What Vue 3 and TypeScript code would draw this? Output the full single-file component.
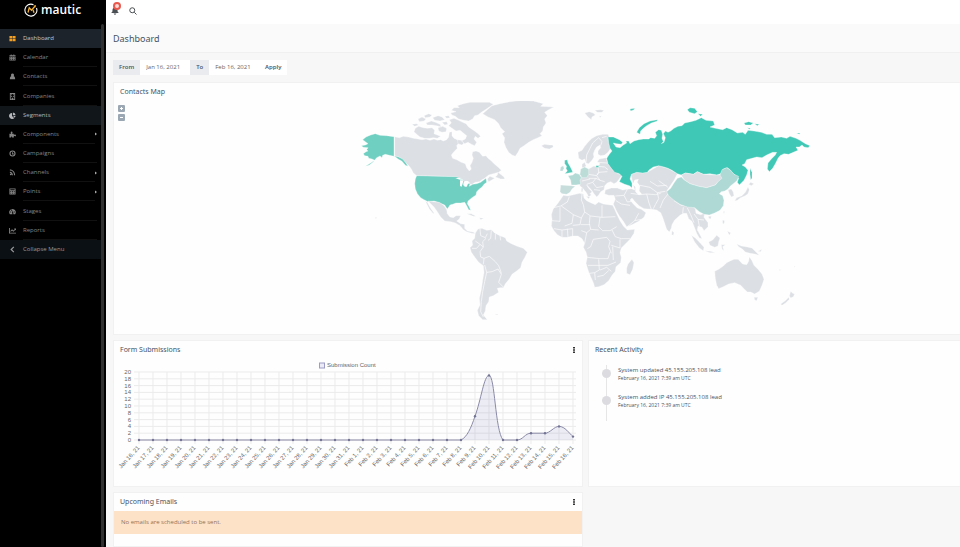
<script setup lang="ts">
import { ref } from 'vue'

interface NavItem {
  label: string
  icon: string
  state?: string
  sub?: boolean
}

const nav: NavItem[] = [
  { label: 'Dashboard', icon: 'M1 2h6.500v5H1zM8.500 2H15v5H8.500zM1 8h6.500v6H1zM8.500 8H15v6H8.500z', state: 'active' },
  { label: 'Calendar', icon: 'M1 3h3V1h2v2h4V1h2v2h3v2H1zM1 6h14v9H1zM3 8v1.500h2V8zm4 0v1.500h2V8zm4 0v1.500h2V8zm-8 3.500V13h2v-1.500zm4 0V13h2v-1.500zm4 0V13h2v-1.500z' },
  { label: 'Contacts', icon: 'M8 1a3.500 3.500 0 0 1 2.500 6C13 8 14 10 14 14H2c0-4 1-6 3.500-7A3.500 3.500 0 0 1 8 1z' },
  { label: 'Companies', icon: 'M2 0h12v16H2zM4 2v12h2v-3h4v3h2V2zM5 3h2v2H5zm4 0h2v2H9zM5 7h2v2H5zm4 0h2v2H9z' },
  { label: 'Segments', icon: 'M7 2v7l5 5A7 7 0 1 1 7 2zM9 1a7 7 0 0 1 6 6H9zM9 8.500h6a7 7 0 0 1-2 4.500z', state: 'hover' },
  { label: 'Components', icon: 'M1 6h4C3 3 4 1 6 1s3 2 1 5h4v3c3-2 5-1 5 1s-2 3-5 1v4H7c1-3-3-3-2 0H1z', sub: true },
  { label: 'Campaigns', icon: 'M8 1a7 7 0 1 0 0 14A7 7 0 0 0 8 1zm0 2.500a4.500 4.500 0 1 1 0 9 4.500 4.500 0 0 1 0-9zM7 5h2v3h2v2H7z' },
  { label: 'Channels', icon: 'M2 1c7 0 12 6 12 13h-2.500C11.500 8 8 3.500 2 3.500zM2 6c4 0 7 4 7 8H6.500C6.500 11 5 8.500 2 8.500zM4 10a2 2 0 1 1 0 4 2 2 0 0 1 0-4z', sub: true },
  { label: 'Points', icon: 'M1 1h14v14H1zM3 3v2h10V3zm0 4v1.500h2V7zm4 0v1.500h2V7zm4 0v1.500h2V7zm-8 4v1.500h2V11zm4 0v1.500h2V11zm4 0v1.500h2V11z', sub: true },
  { label: 'Stages', icon: 'M8 2a7.500 7.500 0 0 1 6 12h-4L9 5l-2 6 1 3H2A7.500 7.500 0 0 1 8 2zM3 8v2h2V8zm2-4v2h2V4zm6 4v2h2V8z' },
  { label: 'Reports', icon: 'M0 2h2v11h14v2H0zM3 9l4-4 3 3 3-3-1.500-1.500H16V8l-1.500-1.500L10 11 7 8l-3 3z' },
  { label: 'Collapse Menu', icon: 'M10 1l2 2-5 5 5 5-2 2-7-7z', state: 'collapse' },
]

const dateFrom = ref('Jan 16, 2021')
const dateTo = ref('Feb 16, 2021')

/* Map: outlines grouped by tile, each tile with its own origin. */
interface Shape {
  tone: string
  d: string
}
interface Tile {
  x: number
  y: number
  shapes: Shape[]
}

const tiles: Tile[] = [
  {
    x: 1050,
    y: 285,
    shapes: [
      { tone: 'land', d: 'M134 125L148 128 160 124 176 126 190 130 204 132 216 134 228 132 240 136 252 132 262 136 272 134 280 138 290 134 296 126 298 112 306 110 306 122 312 130 322 134 328 142 320 152 322 160 312 170 304 180 308 190 320 194 334 202 346 206 350 218 358 228 364 222 360 212 366 202 370 190 366 180 368 170 378 168 388 172 398 184 408 182 414 190 422 196 434 208 444 216 454 226 446 232 430 236 416 240 404 250 396 254 388 260 376 262 366 268 356 268 350 258 340 262 332 254 318 246 200 242 190 234 184 222 178 214 168 204 156 192 146 186 134 183Z' },
      { tone: 'land', d: 'M444 232L452 238 462 246 464 252 452 252 442 248 436 246 442 240ZM412 252L420 244 434 250 424 256 416 260Z' },
      { tone: 'land', d: 'M196 100L206 94 220 98 232 100 246 98 254 106 252 116 262 120 272 124 262 130 250 128 238 130 224 130 210 126 200 118 192 110ZM204 72L216 66 228 72 222 78 208 80ZM186 88L200 86 206 90 194 94ZM228 84L244 78 256 82 270 88 274 96 260 92 246 90 232 90ZM222 62L236 56 246 60 240 66 226 68ZM248 68L264 62 276 66 284 74 270 78 254 76ZM264 98L278 94 290 100 288 110 276 112 266 108ZM276 82L290 80 294 88 284 90ZM284 64L296 62 300 68 290 70Z' },
      { tone: 'land', d: 'M298 74L312 70 326 76 338 82 348 86 356 96 368 104 382 114 392 124 384 130 376 124 372 132 380 142 374 152 364 148 354 142 344 146 334 138 346 132 350 122 340 114 330 106 318 108 306 100 296 92 304 84ZM322 134L334 136 342 144 336 150 324 146Z' },
      { tone: 'land', d: 'M318 50L304 46 312 38 328 38 322 32 340 26 360 22 390 22 418 22 430 28 418 36 406 44 394 52 384 60 374 62 368 72 356 78 342 76 326 72 316 64 306 60 302 54Z' },
      { tone: 'usa', d: 'M132 125L132 184 118 181 106 178 98 181 96 188 90 183 80 188 70 200 58 210 46 214 62 204 74 196 66 192 56 190 54 184 44 182 40 176 48 170 54 168 50 164 54 158 40 157 34 152 46 150 54 146 46 140 38 134 48 126 62 120 76 116 90 121 110 122ZM132 182L146 186 158 192 168 204 174 214 166 211 156 199 144 192Z' },
      { tone: 'usa', d: 'M200 242L318 245 332 250 342 258 340 270 346 276 352 264 360 266 358 274 368 268 380 266 392 262 400 256 408 250 410 262 402 268 396 276 388 282 380 290 378 300 366 308 354 318 352 326 358 336 362 346 356 344 350 332 344 322 332 324 318 324 308 328 300 330 292 342 284 330 274 326 264 322 252 318 234 320 222 314 212 308 202 296 196 282 194 266 196 252Z' },
      { tone: 'sea', d: 'M330 256L340 256 338 266 334 276 330 272ZM316 250L328 248 340 254 330 254ZM344 258L354 258 360 264 354 266 350 276 346 272Z' },
      { tone: 'land', d: 'M76 366l5 2-4 3z' },
    ],
  },
  {
    x: 1470,
    y: 285,
    shapes: [
      { tone: 'land', d: 'M-22 56L-8 44 6 32 30 26 60 20 96 16 130 18 160 26 152 34 192 36 176 44 164 52 172 62 164 72 168 84 160 96 158 108 150 116 156 122 144 128 130 134 116 142 102 152 90 160 84 172 76 184 66 180 56 172 48 158 42 142 44 128 36 116 44 110 32 98 26 86 14 74 -6 66Z' },
      { tone: 'land', d: 'M154 152L164 148 178 150 188 150 190 156 178 162 164 160ZM284 54L298 50 310 54 316 60 306 66 304 74 294 66ZM314 46L330 44 342 46 336 52 322 52ZM328 62L334 64 330 68Z' },
      { tone: 'land', d: 'M264 172L276 166 284 154 294 142 306 130 320 122 338 118 354 118 358 126 354 136 358 148 362 160 354 172 344 180 332 182 324 178 324 168 332 158 330 150 320 156 314 166 310 176 312 186 306 196 296 206 288 204 284 192 276 196 266 190ZM276 208L284 202 288 212 284 218 276 218Z' },
      { tone: 'land', d: 'M296 222L310 214 324 214 330 206 322 200 328 192 348 188 354 206 366 222 384 236 396 240 386 254 380 262 372 266 362 260 352 264 344 272 342 284 332 290 326 300 320 306 312 296 304 284 296 276 290 270 296 280 306 290 300 296 304 300 296 306 290 294 280 282 270 272 266 262 272 244 280 230Z' },
      { tone: 'line', d: 'M288 202L290 180 300 160 308 144 326 128M326 128L336 140 332 152M336 128L350 124M322 202L352 204M324 214L344 216 354 224M324 214L326 232 322 240M296 238L320 242 326 232 352 230M320 242L330 256 344 260M296 250L318 250 330 256M290 268L308 262 318 250M308 262L320 278 340 274M276 258L300 252M312 284L330 286' },
      { tone: 'de', d: 'M272 222L284 216 296 222 296 238 290 248 276 248 270 238Z' },
      { tone: 'fr', d: 'M234 242L248 240 256 234 268 238 274 248 270 256 272 268 258 270 244 270 242 256Z' },
      { tone: 'es', d: 'M212 270L244 272 256 274 246 282 240 292 230 298 216 296 210 290Z' },
      { tone: 'gb', d: 'M224 196L232 194 234 204 240 214 246 226 248 232 236 234 224 236 232 228 228 220 230 214 224 206Z' },
      { tone: 'de', d: 'M212 216L220 212 222 220 218 228 210 228Z' },
      { tone: 'land', d: 'M274 280L279 279 278 290 274 290ZM288 304L300 306 296 311Z' },
      { tone: 'ru', d: 'M318 212h8v5h-8z' },
    ],
  },
  {
    x: 1620,
    y: 540,
    shapes: [
      { tone: 'land', d: 'M272 -18L290 -23 322 -23 356 -43 384 -35 412 -19 402 1 380 33 402 59 442 79 450 74 466 86 468 100 482 104 494 100 492 112 504 128 504 140 492 152 486 142 474 138 472 150 480 164 486 176 478 174 470 160 464 144 456 124 446 116 440 100 430 100 420 106 404 120 396 134 394 144 388 156 380 148 374 130 368 112 362 98 350 90 336 88 312 86 298 78 284 64 276 54 270 60 280 72 292 84 304 88 318 98 312 112 296 124 276 134 260 140 250 124 238 108 228 90 220 72 226 58 222 46 206 46 194 42 196 30 214 24 232 24 248 30 262 28 274 26 284 30Z' },
      { tone: 'sea', d: 'M284 -1L296 -3 292 7 300 17 298 33 306 43 296 45 286 35 286 21 278 13Z' },
      { tone: 'line', d: 'M226 48L252 46 262 28M252 46L262 66 276 64M228 62L244 72 270 76M262 140L284 122 304 118M284 122L296 100M272 40L300 44 320 42 326 66 334 88M300 16L330 22 352 38 376 34M320 42L346 44 362 40M352 38L356 56 346 74 340 86M330 4L352 18 380 16M356 2L384 22M384 42L370 60 360 84M402 62L424 76 444 78M430 82L428 100M442 84L452 104 462 128M462 102L474 118 492 120M474 118L478 138' },
      { tone: 'land', d: 'M396 152l6 6-2 8-5-2z' },
      { tone: 'land', d: 'M70 46L84 48 100 44 118 40 130 42 132 54 140 62 152 68 166 74 176 66 190 72 206 74 218 76 224 88 232 106 240 122 250 138 262 150 284 148 282 160 270 178 256 192 244 204 240 218 244 232 242 248 228 260 226 274 216 286 206 302 192 314 176 320 164 322 160 308 152 290 144 270 138 250 142 232 138 216 130 202 134 190 126 176 114 168 98 168 82 172 66 172 52 164 42 152 34 138 36 118 34 104 40 86 52 72 62 58Z' },
      { tone: 'land', d: 'M276 238L282 248 278 268 270 284 260 280 260 264 264 252Z' },
      { tone: 'line', d: 'M88 50L82 66 62 78 36 84M64 78L100 104 124 114 134 96 152 108 186 112M126 42L124 60 130 74 134 96M186 76L186 112 226 110M60 82L60 124 36 122M100 104L96 130 74 138M124 114L120 134 98 136M150 108L148 130 152 148M122 134L150 134M180 112L176 140 188 152 210 152 230 140M216 150L226 170 244 176 270 176M124 152L140 158 152 148 176 150M140 158L134 190M160 178L200 172 210 184 206 200 214 220M160 178L152 200 142 206M142 232L180 236 204 236 210 216M144 256L204 256 228 246M176 238L178 270 164 278 148 280M164 278L166 300M180 270L200 262 214 274M172 290L190 286 206 272M66 150L66 172M82 146L84 172M98 146L98 168M42 146L66 150 98 146M240 178L240 204M214 196L240 204M218 200L220 240' },
    ],
  },
  {
    x: 1800,
    y: 285,
    shapes: [
      { tone: 'ru', d: 'M24 126L40 126 58 134 68 142 64 148 50 146 40 144 48 156 60 158 70 150 80 144 78 138 86 138 90 146 102 138 116 134 130 132 146 132 152 128 164 130 170 122 166 112 176 104 184 106 188 118 186 130 190 140 184 146 192 142 196 128 190 116 196 108 204 112 212 108 222 100 234 94 246 92 254 84 272 80 288 76 304 68 318 76 340 78 344 90 330 96 346 100 368 104 380 98 396 104 412 114 428 112 436 118 444 106 462 108 484 112 500 118 516 118 524 128 544 126 560 130 570 124 588 130 600 136 616 146 630 152 624 158 612 156 606 150 598 156 588 156 594 166 580 172 566 178 552 176 540 182 534 190 526 206 518 220 508 230 502 222 504 204 514 192 526 180 530 172 518 172 500 180 486 188 470 186 456 190 440 194 434 206 426 210 436 216 444 226 440 240 432 256 418 270 412 262 416 250 408 242 398 234 390 224 382 218 370 222 362 236 350 240 330 236 310 238 292 230 280 238 256 234 244 240 232 236 216 226 204 220 192 216 176 212 160 216 148 224 142 232 128 234 110 232 94 238 90 252 96 264 96 278 88 272 74 268 58 260 66 244 58 236 44 232 34 220 24 206 20 190 28 178 36 168 30 160 26 144Z' },
      { tone: 'ru', d: 'M110 112L118 98 132 86 150 78 172 74 172 78 154 84 140 92 130 100 122 108 120 118ZM262 44L270 38 284 40 292 50 284 56 268 52ZM294 56L308 58 302 64ZM432 84L446 80 460 84 452 90 436 90ZM464 86L478 88 472 92ZM590 114L600 114 598 118ZM90 42L104 40 102 44 92 48ZM442 98L452 100 448 103ZM450 220L456 232 456 250 452 254 450 238Z' },
      { tone: 'land', d: 'M244 240L256 234 280 238 292 230 310 238 350 240 366 240 372 250 356 258 346 270 320 278 296 274 270 266 252 254Z' },
      { tone: 'cn', d: 'M232 250L244 246 252 254 270 266 296 274 320 278 346 270 356 258 366 250 360 240 366 224 380 218 392 226 402 238 416 244 412 256 400 266 392 272 384 282 374 288 364 290 358 296 368 302 372 316 370 332 360 346 344 354 328 360 312 358 298 350 284 338 262 336 240 328 222 316 206 302 200 290 212 280 222 264Z' },
      { tone: 'land', d: 'M384 284L394 282 400 292 402 302 394 306 388 296ZM446 268L452 262 462 266 454 272ZM444 276L448 284 444 296 436 302 422 308 412 316 404 318 410 308 426 302 436 292ZM370 350L374 348 372 358ZM326 364L334 364 332 372 326 370Z' },
    ],
  },
  {
    x: 1290,
    y: 585,
    shapes: [
      { tone: 'land', d: 'M144 102L156 100 170 106 184 104 194 114 210 122 226 128 230 138 244 146 262 154 280 160 292 172 284 188 276 202 272 218 260 228 246 238 238 252 226 266 220 278 210 278 202 280 206 292 190 302 178 306 176 320 168 332 166 348 160 360 172 374 158 374 146 362 142 346 150 330 148 310 154 284 158 256 162 232 160 212 146 202 134 186 124 172 120 158 128 150 126 138 134 130 136 114Z' },
      { tone: 'line', d: 'M136 138L150 148 160 156 158 140 168 130M150 102L152 122 166 128 172 116M184 106L182 130 174 136M196 116L196 134M210 122L212 136M126 160L140 160 150 148M160 156L150 170 152 186 162 190 160 208M162 190L178 184 196 200 206 212 212 228 214 236M164 210L170 232 164 260 158 290 154 320 152 350 160 366M170 232L186 230 204 222 214 238 206 262 220 276' },
      { tone: 'land', d: 'M-6 18L10 20 28 22 42 32 50 44 52 56 60 66 70 68 78 62 92 62 88 72 80 78 92 86 104 88 104 100 112 108 124 110 132 112 134 116 122 114 110 110 100 104 90 92 76 84 62 80 44 78 32 66 22 50 12 36ZM-14 18L-8 22 2 40 12 54 10 56 -2 42ZM110 56L124 56 138 64 130 64ZM148 68L162 70 152 74ZM194 357L204 357 202 360Z' },
    ],
  },
  {
    x: 1980,
    y: 570,
    shapes: [
      { tone: 'land', d: 'M94 136L106 144 120 158 132 172 130 182 118 174 104 156ZM134 182L152 184 166 188 150 188ZM146 156L158 150 170 136 180 144 176 156 174 168 164 172 150 166ZM184 164L196 164 188 170 192 182 186 178ZM188 90L194 92 192 102 188 100ZM202 124L212 128 208 136ZM230 162L244 168 258 170 276 174 288 186 298 196 284 192 270 190 256 186 248 178 236 170ZM294 184L306 178 302 185Z' },
      { tone: 'land', d: 'M164 244L176 238 190 228 200 218 212 212 222 208 234 208 240 214 248 222 260 224 266 214 268 200 276 212 282 226 294 238 306 252 312 268 306 286 298 304 284 312 272 306 262 306 252 296 242 286 224 278 206 282 190 290 176 296 170 286 166 266ZM282 322L294 322 290 332 284 330Z' },
      { tone: 'land', d: 'M392 304L398 310 404 312 400 320 392 324 388 318ZM386 322L388 328 376 340 366 346 362 342 376 332ZM358 238L362 240 359 242ZM402 228L406 230 403 232Z' },
    ],
  },
]

/* Chart */
const counts = [...Array(24).fill(0), 7, 19, 0, 0, 2, 2, 4, 1] as number[]
const left = 25
const step = 14
const base = 81
const unit = 3.4
const px = (i: number) => left + i * step
const py = (v: number) => base - v * unit
const days = counts.map((v, i) => ({
  x: px(i),
  y: py(v),
  label: i < 16 ? `Jan ${16 + i}, 21` : `Feb ${i - 15}, 21`,
}))
const ticks = Array.from({ length: 11 }, (_, i) => ({ value: i * 2, y: py(i * 2) }))
const curve =
  `M${px(0)} ${base}L${px(23)} ${base}` +
  `C${px(23) + 6} ${base - 3} ${px(24) - 4} ${py(7) + 12} ${px(24)} ${py(7)}` +
  `C${px(24) + 6} ${py(7) - 16} ${px(25) - 5} ${py(19)} ${px(25)} ${py(19)}` +
  `C${px(25) + 6} ${py(19)} ${px(26) - 8} ${base - 10} ${px(26)} ${base}` +
  `L${px(27)} ${base}` +
  `C${px(27) + 6} ${base} ${px(28) - 6} ${py(2)} ${px(28)} ${py(2)}` +
  `L${px(29)} ${py(2)}` +
  `C${px(29) + 5} ${py(2)} ${px(30) - 5} ${py(4)} ${px(30)} ${py(4)}` +
  `C${px(30) + 6} ${py(4)} ${px(31) - 4} ${py(2)} ${px(31)} ${py(1)}`
const area = `${curve}V${base}Z`

const activity = [
  { text: 'System updated 45.155.205.108 lead', time: 'February 16, 2021 7:39 am UTC' },
  { text: 'System added IP 45.155.205.108 lead', time: 'February 16, 2021 7:39 am UTC' },
]
</script>

<template>
  <div class="app">
    <aside class="sidebar">
      <a class="brand" href="#" aria-label="mautic">
        <svg class="brand-mark" viewBox="0 0 28 28">
          <path d="M19 3.500A12 12 0 1 0 25 10" fill="none" stroke="#fff" stroke-width="2.200" />
          <path d="M8 19l2.500-9.500 4.500 5 7-8" fill="none" stroke="#f5b335" stroke-width="2.600" />
          <path d="M18 13.500l2 6" fill="none" stroke="#f5b335" stroke-width="2.600" />
          <path d="M19 5.500l5-1.500-1 5z" fill="#f5b335" />
        </svg>
        <span class="brand-name">mautic</span>
      </a>
      <nav class="nav">
        <a v-for="item in nav" :key="item.label" href="#" class="nav-item" :class="item.state">
          <svg class="nav-icon" viewBox="0 0 16 16"><path :d="item.icon" fill-rule="evenodd" /></svg>
          <span class="nav-label">{{ item.label }}</span>
          <svg v-if="item.sub" class="caret" viewBox="0 0 4 6"><path d="M0 0l4 3-4 3z" /></svg>
        </a>
      </nav>
      <div class="scroll-thumb"></div>
    </aside>

    <div class="page">
      <header class="topbar">
        <button class="icon-button" type="button" aria-label="Notifications">
          <svg class="bell" viewBox="0 0 16 16"><path d="M8 1a5 5 0 0 1 5 5c0 4 1 5 3 6H0c2-1 3-2 3-6a5 5 0 0 1 5-5zM5 13h6l-3 3z" /></svg>
          <span class="badge"></span>
        </button>
        <button class="icon-button" type="button" aria-label="Search">
          <svg class="lens" viewBox="0 0 16 16"><circle cx="6.500" cy="6.500" r="5" /><path d="M10.500 10.500L15 15" /></svg>
        </button>
      </header>
      <div class="page-head"><h1>Dashboard</h1></div>

      <main class="content">
        <form class="range" @submit.prevent>
          <label for="date-from">From</label>
          <input id="date-from" v-model="dateFrom" type="text" />
          <label for="date-to">To</label>
          <input id="date-to" v-model="dateTo" type="text" />
          <button type="submit">Apply</button>
        </form>

        <section class="card edge map-card">
          <h2>Contacts Map</h2>
          <div class="map-wrap">
            <svg class="map" viewBox="342 303 2538 693">
              <g v-for="(tile, t) in tiles" :key="t" :transform="`translate(${tile.x} ${tile.y})`">
                <path v-for="(shape, s) in tile.shapes" :key="s" :class="shape.tone" :d="shape.d" />
              </g>
            </svg>
            <div class="zoom">
              <button type="button" aria-label="Zoom in"><svg viewBox="0 0 7 7"><path d="M3.500 2v3M2 3.500h3" /></svg></button>
              <button type="button" aria-label="Zoom out"><svg viewBox="0 0 7 7"><path d="M2 3.500h3" /></svg></button>
            </div>
          </div>
        </section>

        <div class="row">
          <section class="card chart-card">
            <div class="card-head">
              <h2>Form Submissions</h2>
              <button class="more" type="button" aria-label="Options">
                <svg viewBox="0 0 2 6"><path d="M0 0h2v1.500H0zM0 2.200h2v1.500H0zM0 4.500h2V6H0z" /></svg>
              </button>
            </div>
            <svg class="chart" viewBox="0 0 468 118">
              <g class="legend">
                <rect x="205.500" y="4" width="5" height="5" />
                <text x="213" y="8">Submission Count</text>
              </g>
              <path v-for="tick in ticks" :key="tick.value" class="grid" :d="`M20 ${tick.y}H462`" />
              <path v-for="day in days" :key="day.label" class="grid" :d="`M${day.x} 13V85`" />
              <text v-for="tick in ticks" :key="tick.value" class="tick" x="17" :y="tick.y + 2">{{ tick.value }}</text>
              <text v-for="day in days" :key="day.label" class="tick" :transform="`translate(${day.x + 1} 89) rotate(-48)`">{{ day.label }}</text>
              <path class="area" :d="area" />
              <path class="curve" :d="curve" />
              <circle v-for="day in days" :key="day.label" class="dot" :cx="day.x" :cy="day.y" r="1.200" />
            </svg>
          </section>

          <section class="card edge">
            <h2>Recent Activity</h2>
            <ul class="timeline">
              <li v-for="entry in activity" :key="entry.text">
                <p class="event">{{ entry.text }}</p>
                <p class="time">{{ entry.time }}</p>
              </li>
            </ul>
          </section>
        </div>

        <div class="row last">
          <section class="card">
            <div class="card-head">
              <h2>Upcoming Emails</h2>
              <button class="more" type="button" aria-label="Options">
                <svg viewBox="0 0 2 6"><path d="M0 0h2v1.500H0zM0 2.200h2v1.500H0zM0 4.500h2V6H0z" /></svg>
              </button>
            </div>
            <p class="alert">No emails are scheduled to be sent.</p>
          </section>
        </div>
      </main>
    </div>
  </div>
</template>

<style>
body {
  margin: 0;
}
</style>

<style scoped>
* {
  box-sizing: border-box;
}
.app {
  display: flex;
  min-height: 100vh;
  background: #f7f7f7;
  color: #47535f;
  font-family: "Open Sans", "Noto Sans", sans-serif;
  font-size: 6px;
}
h1,
h2,
p,
ul {
  margin: 0;
  padding: 0;
  font-weight: 400;
}
button,
input {
  border: 0;
  padding: 0;
  background: none;
  color: inherit;
  font: inherit;
}
a {
  color: inherit;
  text-decoration: none;
}
svg {
  display: block;
}
.sidebar {
  position: relative;
  flex: none;
  width: 106px;
  background: #000;
}
.brand {
  display: flex;
  align-items: center;
  gap: 3px;
  height: 20px;
  margin-bottom: 9px;
  padding-left: 24px;
  color: #fff;
}
.brand-mark {
  width: 14px;
  height: 14px;
}
.brand-name {
  font-size: 12px;
  font-weight: 600;
  line-height: 16px;
}
.nav {
  display: grid;
  grid-auto-rows: 1fr;
  height: 230px;
  margin-right: 4px;
}
.nav-item {
  display: flex;
  align-items: center;
  padding: 0 5px 0 9px;
  color: #858585;
}
.nav-icon {
  width: 7px;
  height: 7px;
  margin-right: 7px;
  fill: currentColor;
}
.nav-label {
  display: flex;
  flex: 1;
  align-items: center;
  align-self: stretch;
  border-bottom: 1px solid #111;
}
.caret {
  width: 2px;
  height: 4px;
  fill: #aaa;
}
.active {
  background: #1d232b;
  color: #c4c8cc;
}
.active .nav-icon {
  fill: #f8a01c;
}
.hover {
  background: #11161b;
  color: #b4b6b8;
}
.collapse {
  background: #0b1015;
  color: #999;
}
.active .nav-label,
.hover .nav-label,
.collapse .nav-label {
  border-color: transparent;
}
.scroll-thumb {
  position: absolute;
  top: 24px;
  right: 2px;
  bottom: 0;
  width: 3px;
  border-radius: 2px;
  background: #2f2f2f;
}
.page {
  display: flex;
  flex: 1;
  flex-direction: column;
  min-width: 0;
}
.topbar {
  display: flex;
  align-items: center;
  gap: 9px;
  height: 24px;
  padding: 0 5px 3px;
  background: #fff;
  box-shadow: 0 1px 2px #ddd;
}
.icon-button {
  position: relative;
  width: 8px;
  height: 8px;
  color: #4a4f54;
}
.bell {
  width: 8px;
  height: 8px;
  fill: currentColor;
}
.badge {
  position: absolute;
  top: -5px;
  left: 2px;
  width: 8px;
  height: 8px;
  border: 2px solid #e9574d;
  border-radius: 50%;
  background: #fbdcd8;
}
.lens {
  width: 8px;
  height: 8px;
  margin-left: 1px;
  fill: none;
  stroke: currentColor;
  stroke-width: 2;
}
.page-head {
  height: 29px;
  padding: 0 7px;
  border-bottom: 1px solid #f0f0f0;
  background: #fafafa;
}
h1,
h2 {
  font-family: "Noto Sans", "Open Sans", sans-serif;
}
h1 {
  font-size: 9px;
  line-height: 29px;
}
.content {
  display: flex;
  flex: 1;
  flex-direction: column;
  gap: 5px;
  padding: 7px 0 0 7px;
}
.range {
  display: flex;
  align-self: flex-start;
  height: 15px;
  margin-bottom: 2px;
  background: #fff;
  line-height: 15px;
}
.range label {
  padding: 0 6px;
  background: #e9ebef;
  font-weight: 600;
}
.range input {
  width: 50px;
  padding: 0 6px;
  color: #666;
}
.range button {
  width: 28px;
  font-weight: 600;
}
.card {
  min-width: 0;
  border: 1px solid #f1f1f1;
  background: #fefefe;
}
.edge {
  border-right: 0;
}
.card h2 {
  padding-left: 6px;
  font-size: 7px;
  line-height: 18px;
}
.card-head {
  display: flex;
  align-items: center;
  justify-content: space-between;
  padding-right: 7px;
}
.more svg {
  width: 2px;
  height: 6px;
  fill: #333;
}
.map-card {
  height: 253px;
}
.map-wrap {
  position: relative;
}
.map {
  width: 100%;
}
.zoom {
  position: absolute;
  top: 4px;
  left: 4px;
  display: grid;
  gap: 2px;
}
.zoom button {
  width: 7px;
  height: 7px;
  border-radius: 1px;
  background: #9ba8b4;
}
.zoom path {
  stroke: #fff;
}
.land,
.usa,
.ru,
.cn,
.gb,
.fr,
.de,
.es {
  stroke: #fefefe;
  stroke-width: 1;
}
.land {
  fill: #dcdfe4;
}
.usa {
  fill: #6fcfc1;
}
.ru {
  fill: #3fc8b5;
}
.cn {
  fill: #aed9d5;
}
.gb {
  fill: #50c8b7;
}
.fr {
  fill: #b4dad5;
}
.de {
  fill: #bcdcd8;
}
.es {
  fill: #c6dddb;
}
.sea {
  fill: #fefefe;
}
.line {
  fill: none;
  stroke: #fefefe;
  stroke-width: 2;
}
.row {
  display: grid;
  grid-template-columns: 470fr 372fr;
  gap: 5px;
}
.last {
  flex: 1;
}
.chart-card {
  height: 147px;
}
.chart {
  width: 100%;
}
.chart text {
  fill: #666;
  font-family: "Liberation Sans", Arial, sans-serif;
  font-size: 6px;
}
.chart .tick {
  text-anchor: end;
}
.legend rect {
  fill: #ebebf7;
  stroke: #9c9cc4;
}
.grid {
  fill: none;
  stroke: #ebebeb;
  stroke-width: 1;
}
.area {
  fill: #4e5d9d;
  fill-opacity: 0.1;
}
.curve {
  fill: none;
  stroke: #8a8aa8;
}
.dot {
  fill: #737394;
}
.timeline {
  padding: 6px 0 0 17px;
  list-style: none;
}
.timeline li {
  position: relative;
  height: 27px;
  padding: 1px 0 0 11px;
  border-left: 1px solid #e6e6e6;
}
.timeline li:last-child {
  height: 29px;
}
.timeline li::before {
  position: absolute;
  top: 4px;
  left: -5px;
  width: 9px;
  height: 9px;
  border-radius: 50%;
  background: #dcdce0;
  content: "";
}
.event {
  line-height: 8px;
}
.time {
  font-size: 5px;
  line-height: 8px;
}
.alert {
  padding: 0 7px;
  background: #fde2c8;
  color: #8f7259;
  line-height: 23px;
}
</style>
